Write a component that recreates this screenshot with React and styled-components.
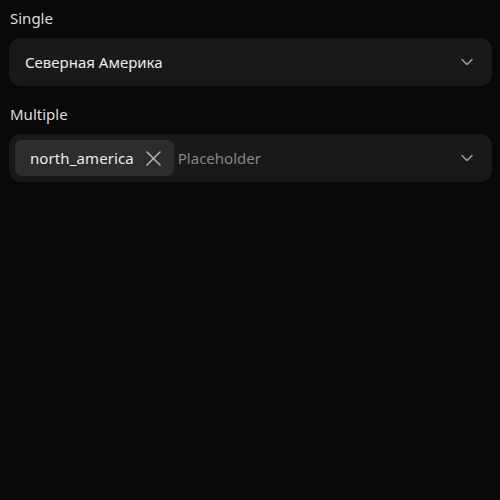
import styled, { createGlobalStyle } from "styled-components";

const GlobalStyle = createGlobalStyle`
    html, body {
        margin: 0;
        padding: 0;
        background: #080808;
    }
    body {
        font-family: "Noto Sans", "Open Sans", sans-serif;
        color: #e6e6e6;
    }
`

const Page = styled.div`
    min-height: 500px;
    box-sizing: border-box;
    padding: 8px 8px 0 9px;
    display: flex;
    flex-direction: column;
    gap: 18px;
`

const Field = styled.div`
    display: flex;
    flex-direction: column;
    gap: 10px;
`

const Label = styled.div`
    font-size: 15px;
    line-height: 20px;
    color: #dedede;
    padding-left: 1px;
`

const SelectBox = styled.div`
    height: 48px;
    box-sizing: border-box;
    background: #191919;
    border-radius: 12px;
    display: flex;
    align-items: center;
    padding: ${p => (p.multi ? "0 15px 0 6px" : "0 15px 0 16px")};
    gap: 4px;
`

const Value = styled.div`
    flex: 1;
    font-size: 15px;
    color: #ececec;
    white-space: nowrap;
`

const Placeholder = styled(Value)`
    color: #858585;
`

const Tag = styled.div`
    height: 36px;
    box-sizing: border-box;
    display: flex;
    align-items: center;
    gap: 12px;
    padding: 0 13px 0 15px;
    background: #2d2d2d;
    border-radius: 7px;
    font-size: 15px;
    letter-spacing: 0.1px;
    color: #ececec;
    white-space: nowrap;
`

const Chevron = () => (
    <svg width="20" height="20" viewBox="0 0 24 24" fill="none" stroke="#a3a3a3" strokeWidth="1.7" strokeLinecap="round" strokeLinejoin="round">
        <path d="m6 9 6 6 6-6" />
    </svg>
)

const Close = () => (
    <svg width="15" height="15" viewBox="0 0 15 15" fill="none" stroke="#b4b4b4" strokeWidth="1.5" strokeLinecap="round">
        <path d="M1 1 14 14 M14 1 1 14" />
    </svg>
)

const App = () => {
    return (
        <Page>
            <GlobalStyle />
            <Field>
                <Label>Single</Label>
                <SelectBox>
                    <Value>Северная Америка</Value>
                    <Chevron />
                </SelectBox>
            </Field>
            <Field>
                <Label>Multiple</Label>
                <SelectBox multi>
                    <Tag>
                        north_america
                        <Close />
                    </Tag>
                    <Placeholder>Placeholder</Placeholder>
                    <Chevron />
                </SelectBox>
            </Field>
        </Page>
    )
}

export default App;
